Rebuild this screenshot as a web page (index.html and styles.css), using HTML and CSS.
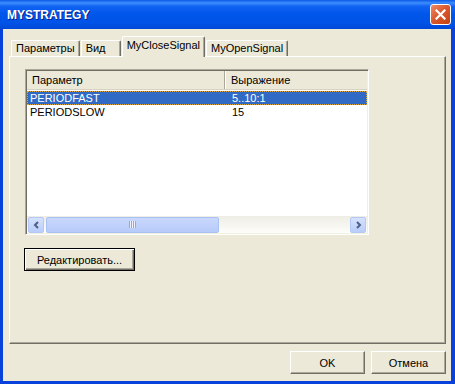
FILE: index.html
```html
<!DOCTYPE html>
<html lang="ru">
<head>
    <meta charset="UTF-8">
    <title>MYSTRATEGY</title>
    <link rel="stylesheet" href="styles.css">
</head>
<body>
    <div class="window">
        <div class="titlebar">
            <span class="title">MYSTRATEGY</span>
            <button class="close" type="button">
                <svg width="11" height="11" viewBox="0 0 11 11"><path d="M1.5 1.5 L9.5 9.5 M9.5 1.5 L1.5 9.5" stroke="#fff" stroke-width="2.2" stroke-linecap="square"/></svg>
            </button>
        </div>

        <div class="client">
            <div class="tabs">
                <div class="tab">Параметры</div>
                <div class="tab">Вид</div>
                <div class="tab active">MyCloseSignal</div>
                <div class="tab">MyOpenSignal</div>
            </div>

            <div class="panel">
                <div class="list">
                    <div class="list-head">
                        <div class="col c1">Параметр</div>
                        <div class="col c2">Выражение</div>
                    </div>
                    <div class="list-body">
                        <div class="row selected"><span class="c1">PERIODFAST</span><span class="c2">5..10:1</span></div>
                        <div class="row"><span class="c1">PERIODSLOW</span><span class="c2">15</span></div>
                    </div>
                    <div class="hscroll">
                        <div class="sb-btn">
                            <svg width="7" height="8" viewBox="0 0 7 8"><path d="M5 1 L2 4 L5 7" fill="none" stroke="#4D6185" stroke-width="2"/></svg>
                        </div>
                        <div class="thumb"><span class="grip"></span></div>
                        <div class="track"></div>
                        <div class="sb-btn">
                            <svg width="7" height="8" viewBox="0 0 7 8"><path d="M2 1 L5 4 L2 7" fill="none" stroke="#4D6185" stroke-width="2"/></svg>
                        </div>
                    </div>
                </div>
                <button class="btn default" type="button">Редактировать...</button>
            </div>

            <div class="footer">
                <button class="btn" type="button">OK</button>
                <button class="btn" type="button">Отмена</button>
            </div>
        </div>
    </div>
</body>
</html>
```

FILE: styles.css
```css
/* Fenêtre générale */
body {
  margin: 0;
  font: 11px "Liberation Sans", Arial, sans-serif;
  color: #000;
  background: #fff;
}

.window {
  width: 455px;
  height: 384px;
  display: flex;
  flex-direction: column;
  background: #0842db;
}

/* Barre de titre */
.titlebar {
  height: 29px;
  flex: none;
  display: flex;
  align-items: center;
  justify-content: space-between;
  padding: 0 4px 0 7px;
  background: linear-gradient(to bottom, #0a5ae8 0%, #3d8cfc 10%, #1062f2 22%, #0056ea 50%, #0053e6 80%, #0048d6 100%);
  color: #fff;
}

.title {
  font-weight: bold;
  font-size: 12px;
  text-shadow: 1px 1px 0 #0a1e8c;
}

.close {
  width: 21px;
  height: 21px;
  padding: 0;
  border: 1px solid #fff;
  border-radius: 3px;
  background: linear-gradient(135deg, #f08a64 0%, #dc5a30 45%, #c4400f 100%);
  display: flex;
  align-items: center;
  justify-content: center;
}

/* Zone client */
.client {
  flex: 1;
  margin: 0 4px 3px 3px;
  padding: 7px 5px 0 6px;
  background: #ece9d8;
  display: flex;
  flex-direction: column;
}

/* Onglets */
.tabs {
  display: flex;
  align-items: flex-end;
  height: 20px;
  padding-left: 2px;
}

.tab {
  min-width: 30px;
  height: 15px;
  line-height: 15px;
  padding: 0 4px;
  margin-right: 1px;
  border: 1px solid #fff;
  border-right-color: #716f64;
  border-bottom: none;
  border-radius: 2px 2px 0 0;
  box-shadow: inset -1px 0 0 #aca899;
  background: #ece9d8;
  white-space: nowrap;
}

.tab.active {
  height: 20px;
  line-height: 17px;
  margin-bottom: -1px;
  position: relative;
  z-index: 1;
}

.panel {
  height: 288px;
  flex: none;
  box-sizing: border-box;
  padding: 12px 0 0 15px;
  border: 1px solid #fff;
  border-right-color: #716f64;
  border-bottom-color: #716f64;
  box-shadow: inset -1px -1px 0 #aca899;
}

/* Liste */
.list {
  width: 344px;
  height: 166px;
  box-sizing: border-box;
  padding: 1px;
  border: 1px solid #aca899;
  border-right-color: #fff;
  border-bottom-color: #fff;
  box-shadow: inset 1px 1px 0 #716f64, inset -1px -1px 0 #f1efe2;
  background: #fff;
  display: flex;
  flex-direction: column;
}

.list-head {
  display: flex;
  height: 18px;
  flex: none;
  background: #ece9d8;
  border-bottom: 1px solid #d6d2c2;
}

.list-head .col {
  line-height: 18px;
  box-sizing: border-box;
  padding-left: 5px;
}

.list-head .c1 {
  width: 198px;
  border-right: 1px solid #aca899;
}

.list-head .c2 {
  flex: 1;
  padding-left: 6px;
  box-shadow: inset 1px 0 0 #fff;
}

.list-body {
  flex: 1;
  padding-top: 1px;
}

.row {
  display: flex;
  height: 14px;
  line-height: 14px;
}

.row .c1 {
  width: 198px;
  box-sizing: border-box;
  padding-left: 3px;
}

.row .c2 {
  padding-left: 7px;
}

.row.selected {
  background: #316ac5;
  color: #fff;
  outline: 1px dotted #d9a441;
  outline-offset: -1px;
}

/* Barre de défilement */
.hscroll {
  height: 17px;
  flex: none;
  display: flex;
  align-items: center;
  background: linear-gradient(to bottom, #eeede5, #fdfdfa);
}

.sb-btn {
  width: 14px;
  height: 14px;
  margin: 0 1px;
  border: 1px solid #b4c8f5;
  border-radius: 2px;
  background: linear-gradient(to bottom, #d6e2fe, #b9cdf9);
  display: flex;
  align-items: center;
  justify-content: center;
}

.thumb {
  width: 171px;
  height: 14px;
  margin-left: 1px;
  border: 1px solid #a9c0f3;
  border-radius: 2px;
  background: linear-gradient(to bottom, #c9d8fd, #b7cbf9);
  display: flex;
  align-items: center;
  justify-content: center;
}

.grip {
  width: 7px;
  height: 7px;
  background: repeating-linear-gradient(to right, #8ea8e6 0 1px, #eef3fe 1px 2px);
}

.track {
  flex: 1;
}

/* Boutons */
.btn {
  display: block;
  height: 23px;
  padding: 0;
  font: inherit;
  color: #000;
  background: #ece9d8;
  border: 1px solid #fff;
  border-right-color: #716f64;
  border-bottom-color: #716f64;
  box-shadow: inset -1px -1px 0 #aca899;
}

.btn.default {
  width: 111px;
  margin: 13px 0 0 -1px;
  border: 1px solid #000;
  box-shadow: inset 1px 1px 0 #fff, inset -1px -1px 0 #716f64, inset -2px -2px 0 #aca899;
}

.footer {
  display: flex;
  justify-content: flex-end;
  gap: 6px;
  margin-top: 7px;
}

.footer .btn {
  width: 75px;
}
```
